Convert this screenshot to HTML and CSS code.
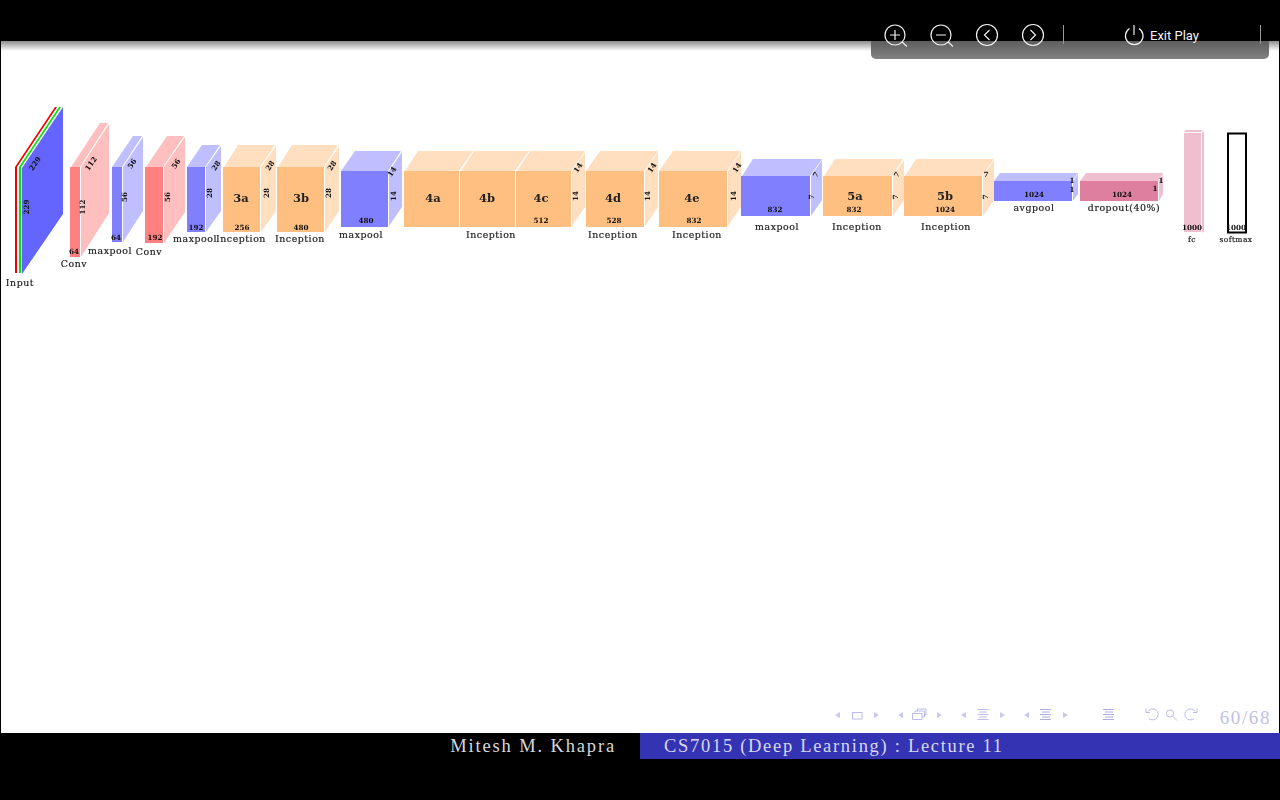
FILE: index.html
```html
<!DOCTYPE html>
<html lang="en">
<head>
<meta charset="utf-8">
<title>CS7015 Lecture 11</title>
<link rel="stylesheet" href="styles.css">
</head>
<body>
<header class="topbar"></header>

<div class="toolbar">
  <svg class="toolbar-icons" viewBox="871 20 398 39" width="398" height="39">
    <g class="tool-stroke">
      <circle cx="895" cy="35" r="10"/><path d="M890 35h10M895 30v10M902 42l5 4.500"/>
      <circle cx="941" cy="35" r="10"/><path d="M936 35h10M948 42l5 4.500"/>
      <circle cx="987" cy="35" r="10.500"/><path d="M989.500 30l-5 5 5 5"/>
      <circle cx="1033" cy="35" r="10.500"/><path d="M1030.500 30l5 5-5 5"/>
      <path class="tool-sep" d="M1063.500 25v19M1260.500 25v19"/>
      <path d="M1129.500 28.500a8.800 8.800 0 1 0 9.500 0M1134 25v10"/>
    </g>
  </svg>
  <span class="exit-label">Exit Play</span>
</div>

<main class="slide">
  <svg class="diagram" viewBox="1 41 1278 260" width="1278" height="260">
    <!-- Input -->
    <polygon class="red" points="15,167 55,107 57,107 17,167 17,273 15,273"/>
    <polygon class="green" points="19,167 59,107 61,107 21,167 21,273 19,273"/>
    <polygon class="deep" points="22,168 63,107 63,214 22,274"/>
    <!-- Conv -->
    <polygon class="r-side" points="71,167 100,123 108,123 80,167"/>
    <polygon class="r-side" points="81,167 109,124 109,213 81,257"/>
    <rect class="r-front" x="70" y="167" width="10" height="90"/>
    <!-- maxpool -->
    <polygon class="b-side" points="112,167 133,136 142,136 122,167"/>
    <polygon class="b-side" points="123,167 143,137 143,211 123,242"/>
    <rect class="b-front" x="112" y="167" width="10" height="75"/>
    <!-- Conv -->
    <polygon class="r-side" points="146,167 167,136 184,136 163,167"/>
    <polygon class="r-side" points="164,167 185,137 185,212 164,243"/>
    <rect class="r-front" x="145" y="167" width="18" height="76"/>
    <!-- maxpool -->
    <polygon class="b-side" points="187,167 202,145 220,145 205,167"/>
    <polygon class="b-side" points="206,167 221,146 221,211 206,232"/>
    <rect class="b-front" x="187" y="167" width="18" height="65"/>
    <!-- 3a -->
    <polygon class="o-side" points="224,167 238,145 275,145 260,167"/>
    <polygon class="o-side" points="261,167 276,146 276,211 261,232"/>
    <rect class="o-front" x="223" y="167" width="37" height="65"/>
    <!-- 3b -->
    <polygon class="o-side" points="278,167 292,145 338,145 324,167"/>
    <polygon class="o-side" points="325,167 339,146 339,211 325,232"/>
    <rect class="o-front" x="277" y="167" width="47" height="65"/>
    <!-- maxpool 480 -->
    <polygon class="b-side" points="341,171 355,151 401,151 388,171"/>
    <polygon class="b-side" points="389,171 402,152 402,207 389,226"/>
    <rect class="b-front" x="341" y="171" width="47" height="56"/>
    <!-- 4a 4b 4c -->
    <polygon class="o-side" points="405,171 418,151 473,151 459,171"/>
    <polygon class="o-side" points="461,171 474,151 529,151 515,171"/>
    <polygon class="o-side" points="517,171 530,151 585,151 571,171"/>
    <polygon class="o-side" points="572,171 585,152 585,207 572,226"/>
    <rect class="o-front" x="404" y="171" width="55" height="56"/>
    <rect class="o-front" x="460" y="171" width="55" height="56"/>
    <rect class="o-front" x="516" y="171" width="55" height="56"/>
    <!-- 4d -->
    <polygon class="o-side" points="586,171 600,151 658,151 644,171"/>
    <polygon class="o-side" points="645,171 658,152 658,207 645,226"/>
    <rect class="o-front" x="586" y="171" width="58" height="56"/>
    <!-- 4e -->
    <polygon class="o-side" points="659,171 673,151 741,151 727,171"/>
    <polygon class="o-side" points="728,171 741,152 741,207 728,226"/>
    <rect class="o-front" x="659" y="171" width="68" height="56"/>
    <!-- maxpool 832 -->
    <polygon class="b-side" points="742,176 753,159 822,159 810,176"/>
    <polygon class="b-side" points="811,176 822,160 822,200 811,216"/>
    <rect class="b-front" x="741" y="176" width="69" height="40"/>
    <!-- 5a -->
    <polygon class="o-side" points="824,176 835,159 903,159 892,176"/>
    <polygon class="o-side" points="893,176 904,160 904,200 893,216"/>
    <rect class="o-front" x="823" y="176" width="69" height="40"/>
    <!-- 5b -->
    <polygon class="o-side" points="905,176 916,159 994,159 982,176"/>
    <polygon class="o-side" points="983,176 994,160 994,200 983,216"/>
    <rect class="o-front" x="904" y="176" width="78" height="40"/>
    <!-- avgpool -->
    <polygon class="b-side" points="994,181 1000,173 1078,173 1072,181"/>
    <polygon class="b-side" points="1073,181 1078,174 1078,194 1073,201"/>
    <rect class="b-front" x="994" y="181" width="78" height="20"/>
    <!-- dropout -->
    <polygon class="p-side" points="1080,181 1086,173 1163,173 1158,181"/>
    <polygon class="p-side" points="1159,181 1163,174 1163,194 1159,201"/>
    <rect class="p-front" x="1080" y="181" width="78" height="20"/>
    <!-- fc -->
    <polygon class="p-side" points="1184,132 1186,130 1203,130 1201,132"/>
    <polygon class="p-side" points="1202,133 1204,131 1204,231 1202,233"/>
    <rect class="p-side" x="1184" y="133" width="17" height="99"/>
    <!-- softmax -->
    <rect class="softmax" x="1228" y="133.500" width="18" height="99"/>

    <!-- block names -->
    <g class="name">
      <text x="241" y="202">3a</text><text x="301" y="202">3b</text>
      <text x="433" y="202">4a</text><text x="487" y="202">4b</text><text x="541" y="202">4c</text>
      <text x="613" y="202">4d</text><text x="692" y="202">4e</text>
      <text x="855" y="200">5a</text><text x="945" y="200">5b</text>
    </g>

    <!-- layer labels -->
    <g class="label">
      <text x="20" y="286">Input</text>
      <text x="74" y="267">Conv</text>
      <text x="110" y="254">maxpool</text>
      <text x="149" y="255">Conv</text>
      <text x="195" y="242">maxpool</text>
      <text x="241" y="242">Inception</text>
      <text x="300" y="242">Inception</text>
      <text x="361" y="238">maxpool</text>
      <text x="491" y="238">Inception</text>
      <text x="613" y="238">Inception</text>
      <text x="697" y="238">Inception</text>
      <text x="777" y="230">maxpool</text>
      <text x="857" y="230">Inception</text>
      <text x="946" y="230">Inception</text>
      <text x="1034" y="211">avgpool</text>
      <text x="1124" y="211">dropout(40%)</text>
      <text class="tiny" x="1192" y="242">fc</text>
      <text class="tiny" x="1236" y="242">softmax</text>
    </g>

    <!-- dimensions on the front faces -->
    <g class="dim">
      <text x="74" y="254">64</text><text x="116" y="240">64</text>
      <text x="155" y="240">192</text><text x="196" y="230">192</text>
      <text x="242" y="230">256</text><text x="301" y="230">480</text>
      <text x="366" y="223">480</text><text x="541" y="223">512</text>
      <text x="614" y="223">528</text><text x="694" y="223">832</text>
      <text x="775" y="212">832</text><text x="854" y="212">832</text>
      <text x="945" y="212">1024</text><text x="1034" y="197">1024</text>
      <text x="1122" y="197">1024</text><text x="1192" y="230">1000</text>
      <text x="1236" y="230">1000</text>
      <text x="1072" y="183">1</text><text x="1072" y="192">1</text>
      <text x="1155" y="191">1</text><text x="1161" y="183">1</text>
      <text x="986" y="177">7</text>
    </g>

    <!-- vertical dimensions -->
    <g class="dim">
      <text transform="translate(29,207) rotate(-90)">229</text>
      <text transform="translate(85,207) rotate(-90)">112</text>
      <text transform="translate(127,197) rotate(-90)">56</text>
      <text transform="translate(170,197) rotate(-90)">56</text>
      <text transform="translate(212,193) rotate(-90)">28</text>
      <text transform="translate(269,193) rotate(-90)">28</text>
      <text transform="translate(331,193) rotate(-90)">28</text>
      <text transform="translate(396,196) rotate(-90)">14</text>
      <text transform="translate(578,196) rotate(-90)">14</text>
      <text transform="translate(650,196) rotate(-90)">14</text>
      <text transform="translate(736,196) rotate(-90)">14</text>
      <text transform="translate(814,197) rotate(-90)">7</text>
      <text transform="translate(898,197) rotate(-90)">7</text>
      <text transform="translate(988,197) rotate(-90)">7</text>
    </g>

    <!-- receding dimensions -->
    <g class="dim">
      <text transform="translate(37,165) rotate(-56)">229</text>
      <text transform="translate(93,165) rotate(-56)">112</text>
      <text transform="translate(134,165) rotate(-56)">56</text>
      <text transform="translate(178,165) rotate(-56)">56</text>
      <text transform="translate(218,167) rotate(-56)">28</text>
      <text transform="translate(272,167) rotate(-56)">28</text>
      <text transform="translate(334,167) rotate(-56)">28</text>
      <text transform="translate(394,173) rotate(-56)">14</text>
      <text transform="translate(580,169) rotate(-56)">14</text>
      <text transform="translate(654,169) rotate(-56)">14</text>
      <text transform="translate(739,169) rotate(-56)">14</text>
      <text transform="translate(818,176) rotate(-56)">7</text>
      <text transform="translate(899,176) rotate(-56)">7</text>
    </g>
  </svg>

  <div class="nav">
    <svg class="nav-icons" viewBox="830 704 370 20" width="370" height="20">
      <g class="nav-fill">
        <path d="M840 711v6l-5-3zM874 711v6l5-3zM903 711v6l-5-3zM937 711v6l5-3zM966 711v6l-5-3zM1000 711v6l5-3zM1029 711v6l-5-3zM1063 711v6l5-3z"/>
      </g>
      <g class="nav-line">
        <rect x="852.500" y="711.500" width="9.500" height="6.500"/>
        <path d="M912.500 712.500h9.500v6h-9.500zM915 712.500v-2.500h9.500v6h-2.500M917.500 710v-2h8.500v6h-2"/>
        <path d="M977.500 708.500h11M979 711h8M977.500 713.500h11M979 716h8M977.500 718.500h11"/>
        <path class="nav-strong" d="M1040 708.500h11M1042 711h8M1040 713.500h11M1042 716h8M1040 718.500h11"/>
        <path class="nav-strong" d="M1103 708.500h11M1105 711h8M1103 713.500h11M1105 716h8M1103 718.500h11"/>
        <path d="M1148 710.500a5.500 5.500 0 1 1 1 7M1146 707.500v4h4"/>
        <circle cx="1170" cy="712.500" r="3.600"/><path d="M1173 715.500l4 4"/>
        <path d="M1195 710.500a5.500 5.500 0 1 0-1 7M1197 707.500v4h-4"/>
      </g>
    </svg>
    <span class="page">60/68</span>
  </div>
</main>

<footer class="footer">
  <div class="footer-row">
    <div class="author">Mitesh M. Khapra</div>
    <div class="course">CS7015 (Deep Learning) : Lecture 11</div>
  </div>
</footer>
</body>
</html>
```

FILE: styles.css
```css
* { box-sizing: border-box; }

html, body {
  margin: 0;
  height: 800px;
  overflow: hidden;
  background: #000;
}

body {
  position: relative;
  display: flex;
  flex-direction: column;
}

.topbar {
  flex: 0 0 41px;
  background: #000;
}

.slide {
  flex: 0 0 692px;
  position: relative;
  display: flex;
  flex-direction: column;
  justify-content: space-between;
  background: #fff;
  border-left: 1px solid #000;
  border-right: 1px solid #000;
}

.slide::before {
  content: "";
  position: absolute;
  top: 0;
  left: 0;
  right: 0;
  height: 10px;
  background: linear-gradient(#8c8c8c, #fff);
}

.diagram {
  display: block;
  position: relative;
  filter: blur(0.3px);
}

.red { fill: #f00000; }
.green { fill: #00e800; }
.deep { fill: #6464ff; }
.r-front { fill: #ff8080; }
.r-side { fill: #ffbfbf; }
.b-front { fill: #8080ff; }
.b-side { fill: #bfbfff; }
.o-front { fill: #ffbf80; }
.o-side { fill: #ffdfbf; }
.p-front { fill: #df7f9f; }
.p-side { fill: #efbfcf; }
.softmax { fill: #fff; stroke: #000; stroke-width: 2; }

.diagram text {
  font-family: "DejaVu Serif", serif;
  text-anchor: middle;
  fill: #111;
}

.name text { font-size: 11.500px; font-weight: 700; fill: #222; }
.label text { font-size: 9.400px; letter-spacing: 0.550px; fill: #222; stroke: #222; stroke-width: 0.200px; }
.label .tiny { font-size: 7.500px; letter-spacing: 0.400px; }
.dim text { font-size: 7.200px; font-weight: 700; }

.nav {
  display: flex;
  justify-content: flex-end;
  align-items: flex-end;
  gap: 20px;
  padding: 0 8px 5px 0;
}

.nav-icons { display: block; margin-bottom: 3px; }
.nav-fill { fill: #c8c8ee; }
.nav-line { fill: none; stroke: #bcbce8; stroke-width: 1; }
.nav-strong { stroke: #acacde; }

.page {
  font-family: "Liberation Serif", serif;
  font-size: 19px;
  font-weight: 400;
  letter-spacing: 1.600px;
  line-height: 20px;
  color: #c0c0e8;
}

.footer {
  flex: 1;
  background: #000;
}

.footer-row {
  display: grid;
  grid-template-columns: 640px 640px;
  height: 26px;
  font-family: "Liberation Serif", serif;
  font-size: 18.500px;
  line-height: 26px;
}

.author {
  padding-right: 24px;
  text-align: right;
  letter-spacing: 1.850px;
  color: #d8d8d8;
}

.course {
  padding-left: 24px;
  letter-spacing: 1.700px;
  background: #3333b3;
  color: #d8d8f2;
}

.toolbar {
  position: absolute;
  z-index: 2;
  top: 20px;
  left: 871px;
  width: 398px;
  height: 39px;
  border-radius: 0 0 5px 5px;
  background: linear-gradient(transparent 21px, #5e5e5e 21px, #828282 100%);
}

.toolbar-icons { display: block; }
.tool-stroke { fill: none; stroke: #f2f2f2; stroke-width: 1.200; }
.tool-sep { stroke: #9a9a9a; stroke-width: 1; }

.exit-label {
  position: absolute;
  top: 8px;
  left: 279px;
  font-family: Roboto, sans-serif;
  font-size: 13px;
  line-height: 16px;
  color: #f4f4f4;
}
```
